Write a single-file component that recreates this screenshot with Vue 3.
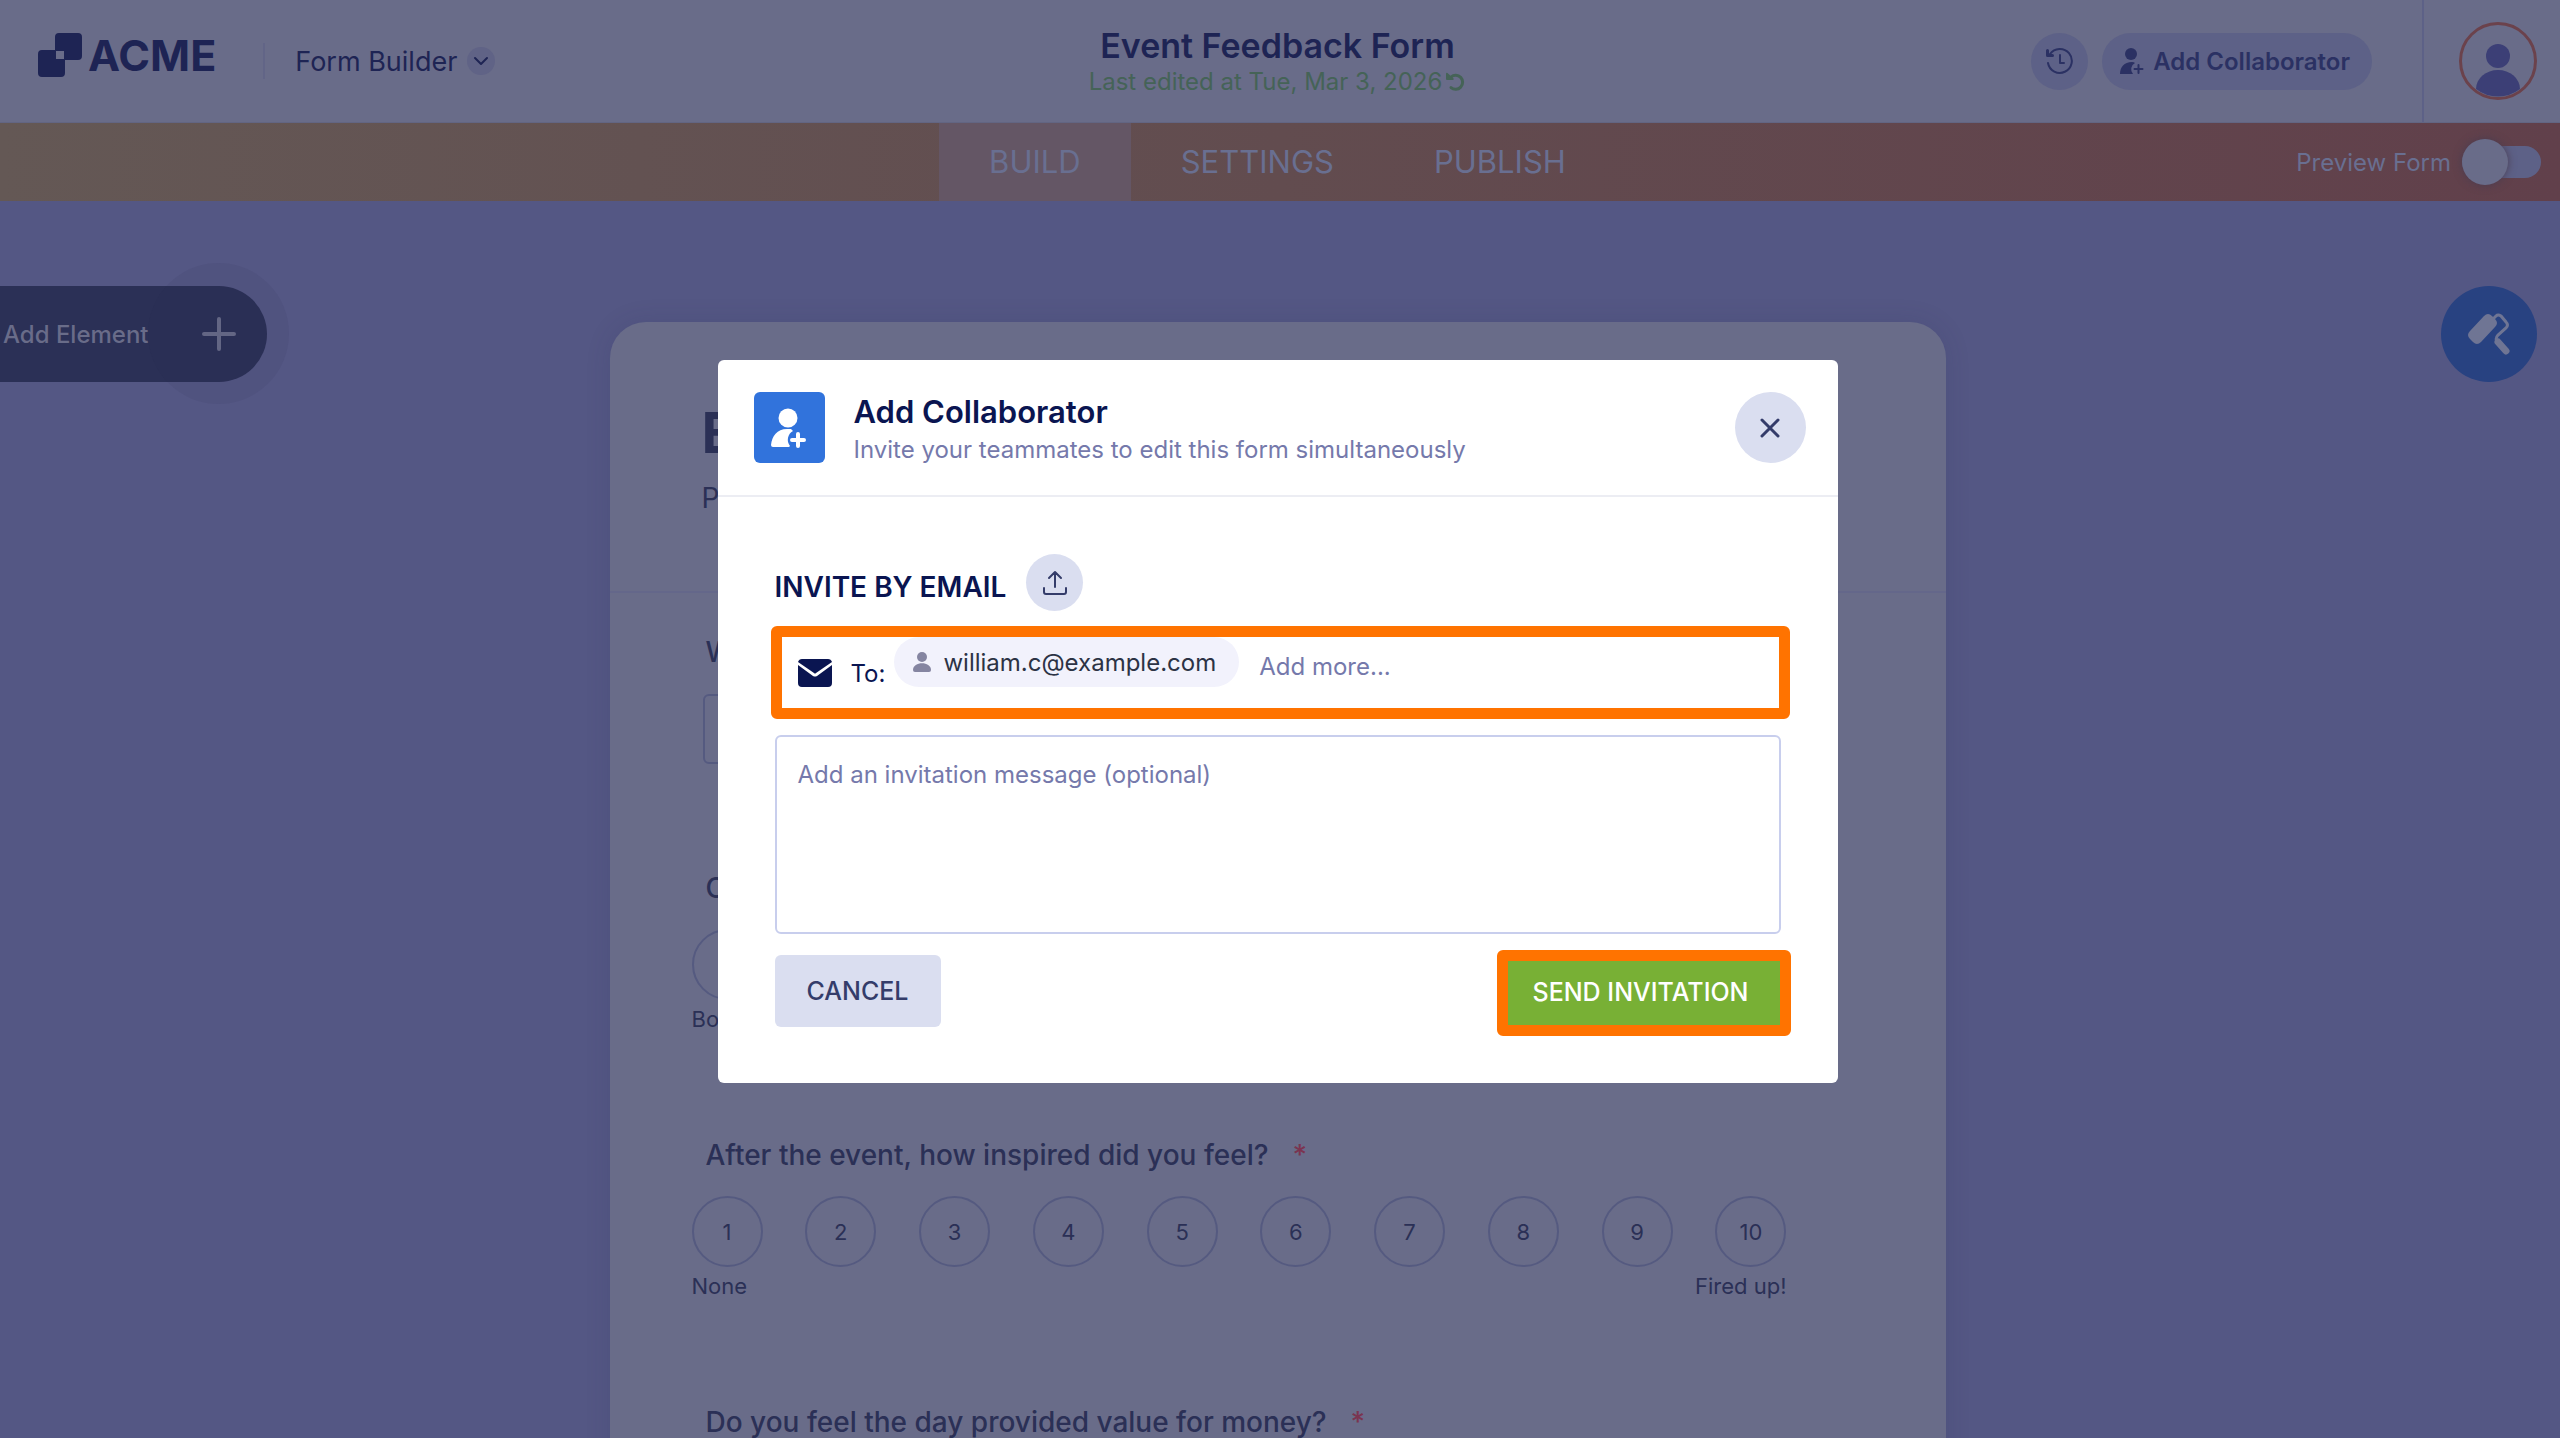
<script setup>
import { ref } from 'vue'

const tabs = ['BUILD', 'SETTINGS', 'PUBLISH']
const activeTab = ref('BUILD')
const preview = ref(false)
const extraEmail = ref('')
const message = ref('')

const questions = [
  { id: 'rating', label: 'Overall', steps: 10, low: 'Boring', high: '' },
  { id: 'inspired', label: 'After the event, how inspired did you feel?', steps: 10, low: 'None', high: 'Fired up!' },
  { id: 'value', label: 'Do you feel the day provided value for money?', steps: 0, low: '', high: '' },
]
</script>

<template>
  <div class="app">
    <header class="topbar">
      <div class="brand-area">
        <a class="brand" href="#">
          <svg class="brand-mark" viewBox="0 0 44 44" aria-hidden="true">
            <path fill="currentColor" fill-rule="evenodd" d="M21 0h19a4 4 0 0 1 4 4v19a4 4 0 0 1-4 4H27v13a4 4 0 0 1-4 4H4a4 4 0 0 1-4-4V21a4 4 0 0 1 4-4h13V4a4 4 0 0 1 4-4zM18 18v8h8v-8z" />
          </svg>
          <span>ACME</span>
        </a>
        <button class="product" type="button">
          Form Builder
          <span class="chevron">
            <svg viewBox="0 0 28 28" aria-hidden="true"><path d="M8 11l6 6 6-6" fill="none" stroke="currentColor" stroke-width="2" stroke-linecap="round" stroke-linejoin="round" /></svg>
          </span>
        </button>
      </div>

      <div class="title-area">
        <h1>Event Feedback Form</h1>
        <p>
          Last edited at Tue, Mar 3, 2026
          <svg viewBox="0 0 20 20" aria-hidden="true">
            <path d="M5 5A7 7 0 1 1 5 15.500" fill="none" stroke="currentColor" stroke-width="3" stroke-linecap="round" />
            <path d="M0 2q0-2 1.500-1L8 7l-1 1H1Q0 8 0 7z" fill="currentColor" />
          </svg>
        </p>
      </div>

      <div class="actions">
        <button class="round" type="button" aria-label="Revision history">
          <svg viewBox="0 0 28 28" fill="none" stroke="currentColor" stroke-width="2" stroke-linecap="round" stroke-linejoin="round" aria-hidden="true">
            <path d="M2 16a12 12 0 1 0 2-9" />
            <path d="M1.500 3.500v5h5" stroke-width="3" />
            <path d="M14 8v8h4" />
          </svg>
        </button>
        <button class="collab" type="button">
          <svg viewBox="0 0 24 26" aria-hidden="true">
            <circle cx="11" cy="6" r="6" fill="currentColor" />
            <path d="M12 14q2 0 3 1a7 7 0 0 0-2 11H0c0-7 4-12 12-12z" fill="currentColor" />
            <path d="M18.500 17v8M14.500 21h8" stroke="currentColor" stroke-width="2" stroke-linecap="round" />
          </svg>
          Add Collaborator
        </button>
        <div class="account">
          <button class="avatar" type="button" aria-label="Account">
            <svg viewBox="0 0 72 72" aria-hidden="true">
              <circle cx="36" cy="31" r="12" fill="currentColor" />
              <path d="M14 64a22 19 0 0 1 44 0a36 36 0 0 1-44 0z" fill="currentColor" />
            </svg>
          </button>
        </div>
      </div>
    </header>

    <nav class="tabbar">
      <div class="tabs">
        <button
          v-for="tab in tabs"
          :key="tab"
          type="button"
          class="tab"
          :class="{ active: tab === activeTab }"
          @click="activeTab = tab"
        >{{ tab }}</button>
      </div>
      <label class="preview">
        Preview Form
        <input v-model="preview" type="checkbox">
        <span class="track"><span class="knob"></span></span>
      </label>
    </nav>

    <main class="workspace">
      <div class="side">
        <button class="add-element" type="button">
          Add Element
          <svg viewBox="0 0 34 34" aria-hidden="true"><path d="M17 2v30M2 17h30" stroke="currentColor" stroke-width="4" stroke-linecap="round" /></svg>
        </button>
      </div>

      <form class="card" @submit.prevent>
        <div class="card-head">
          <h2>Event</h2>
          <p>Please</p>
        </div>
        <div class="question">
          <label class="q-label" for="field-text">What</label>
          <input id="field-text" class="text-field" type="text">
        </div>
        <fieldset v-for="q in questions" :key="q.id" class="question">
          <legend class="q-label">{{ q.label }}<span class="required">*</span></legend>
          <div v-if="q.steps" class="scale">
            <label v-for="n in q.steps" :key="n">
              <input type="radio" :name="q.id" :value="n">{{ n }}
            </label>
          </div>
          <div class="ends"><span>{{ q.low }}</span><span>{{ q.high }}</span></div>
        </fieldset>
      </form>

      <div class="side end">
        <button class="designer" type="button" aria-label="Form designer">
          <svg viewBox="0 0 42 42" aria-hidden="true">
            <path d="M2 18L16 3q4-4 8 0l3 3q4 4 0 8L13 29q-4 4-8 0l-3-3q-4-4 0-8z" fill="currentColor" />
            <path d="M26 5l2-2q2-2 5 0l5 6q3 3 0 6l-8 7q-3 3-1 7" fill="none" stroke="currentColor" stroke-width="3" stroke-linecap="round" />
            <path d="M30 29l8 9" stroke="currentColor" stroke-width="7" stroke-linecap="round" />
          </svg>
        </button>
      </div>
    </main>

    <div class="modal-layer">
      <section class="modal" role="dialog" aria-modal="true" aria-labelledby="modal-title">
        <header class="modal-head">
          <span class="modal-icon">
            <svg viewBox="0 0 36 40" aria-hidden="true">
              <circle cx="17" cy="10" r="9.500" fill="currentColor" />
              <path d="M16 21h4l2 2a10 10 0 0 0-3 15l-1 1H2q-2 0-2-2c1-9 6-16 16-16z" fill="currentColor" />
              <path d="M27 26v12M21 32h12" stroke="currentColor" stroke-width="4" stroke-linecap="round" />
            </svg>
          </span>
          <div class="modal-title">
            <h2 id="modal-title">Add Collaborator</h2>
            <p>Invite your teammates to edit this form simultaneously</p>
          </div>
          <button class="close" type="button" aria-label="Close">
            <svg viewBox="0 0 20 20" aria-hidden="true"><path d="M2 2l16 16M18 2L2 18" stroke="currentColor" stroke-width="3" stroke-linecap="round" /></svg>
          </button>
        </header>

        <form class="modal-body" @submit.prevent>
          <div class="invite-row">
            <h3>INVITE BY EMAIL</h3>
            <button class="upload" type="button" aria-label="Import emails">
              <svg viewBox="0 0 26 26" fill="none" stroke="currentColor" stroke-width="2" stroke-linecap="round" stroke-linejoin="round" aria-hidden="true">
                <path d="M13 17V2M7 8l6-6 6 6M2 18v4q0 2 2 2h18q2 0 2-2v-4" />
              </svg>
            </button>
          </div>

          <div class="to-field">
            <svg class="mail" viewBox="0 0 34 28" aria-hidden="true">
              <path d="M4 0h26q3 0 4 3L18 14q-1 1-2 0L0 3q1-3 4-3z" fill="currentColor" />
              <path d="M0 6l15 11q2 1 4 0L34 6v18q0 4-4 4H4q-4 0-4-4z" fill="currentColor" />
            </svg>
            <label for="more-emails">To:</label>
            <span class="chip">
              <svg viewBox="0 0 18 20" aria-hidden="true">
                <circle cx="9" cy="5" r="5" fill="currentColor" />
                <path d="M0 18c0-9 18-9 18 0q0 2-2 2H2q-2 0-2-2z" fill="currentColor" />
              </svg>
              william.c@example.com
            </span>
            <input id="more-emails" v-model="extraEmail" type="text" placeholder="Add more...">
          </div>

          <textarea v-model="message" aria-label="Invitation message" placeholder="Add an invitation message (optional)"></textarea>

          <div class="buttons">
            <button class="cancel" type="button">CANCEL</button>
            <button class="send" type="submit">SEND INVITATION</button>
          </div>
        </form>
      </section>
    </div>
  </div>
</template>

<style>
body {
  margin: 0;
  background: #545784;
}
</style>

<style scoped>
* {
  box-sizing: border-box;
}

.app {
  --paper: #696c89;
  --ink: #1e2454;
  --form-ink: #2b3056;
  position: relative;
  height: 100vh;
  overflow: hidden;
  display: flex;
  flex-direction: column;
  background: #545784;
  color: var(--ink);
  font-family: Inter, "Liberation Sans", sans-serif;
  font-size: 24px;
}

h1, h2, h3, p {
  margin: 0;
}

button {
  border: 0;
  padding: 0;
  background: none;
  color: inherit;
  font: inherit;
}

svg {
  display: block;
  flex: none;
}

/* Top bar */
.topbar {
  flex: none;
  display: grid;
  grid-template-columns: 1fr auto 1fr;
  height: 123px;
  padding-right: 5px;
  background: var(--paper);
  border-bottom: 1px solid #626582;
}

.brand-area {
  display: flex;
  align-items: center;
  padding-left: 38px;
}

.brand {
  display: flex;
  align-items: center;
  gap: 6px;
  height: 44px;
  margin-bottom: 12px;
  color: var(--ink);
  font-size: 43px;
  font-weight: 700;
  text-decoration: none;
}

.brand-mark {
  width: 44px;
}

.product {
  display: flex;
  align-items: center;
  gap: 10px;
  height: 36px;
  margin-left: 47px;
  padding-left: 30px;
  border-left: 2px solid #626587;
  font-size: 27px;
}

.chevron {
  width: 28px;
  height: 28px;
  border-radius: 50%;
  background: #606386;
}

.title-area {
  padding-top: 24px;
  text-align: center;
}

.title-area h1 {
  font-size: 34px;
  font-weight: 600;
  line-height: 44px;
}

.title-area p {
  display: flex;
  align-items: center;
  justify-content: center;
  gap: 4px;
  color: #456357;
  line-height: 28px;
}

.title-area svg {
  width: 20px;
}

.actions {
  display: flex;
  align-items: center;
  justify-content: flex-end;
  color: #2b3163;
}

.round {
  display: grid;
  place-items: center;
  width: 57px;
  height: 57px;
  margin-right: 14px;
  border-radius: 50%;
  background: #5d6187;
}

.round svg {
  width: 28px;
}

.collab {
  display: flex;
  align-items: center;
  gap: 9px;
  height: 57px;
  padding: 0 22px 0 18px;
  border-radius: 29px;
  background: #5d6187;
  font-weight: 600;
}

.collab svg {
  width: 24px;
}

.account {
  display: flex;
  align-items: center;
  height: 100%;
  margin-left: 50px;
  padding: 0 18px 0 35px;
  border-left: 2px solid #5d6187;
}

.avatar {
  width: 78px;
  height: 78px;
  border: 3px solid #6b424c;
  border-radius: 50%;
  color: #3c3f76;
}

/* Tab bar */
.tabbar {
  flex: none;
  display: grid;
  grid-template-columns: 1fr auto 1fr;
  height: 78px;
  padding-right: 5px;
  background: linear-gradient(90deg, #645855, #624c4f 50%, #61404b);
  color: #696f91;
}

.tabs {
  grid-column: 2;
  display: flex;
}

.tab {
  padding: 0 50px 2px;
  font-size: 31px;
}

.tab.active {
  background: #645665;
}

.preview {
  display: flex;
  align-items: center;
  justify-content: flex-end;
  gap: 11px;
  padding-right: 14px;
  position: relative;
}

.preview input,
.scale input {
  position: absolute;
  opacity: 0;
  margin: 0;
}

.track {
  display: flex;
  align-items: center;
  width: 79px;
  height: 32px;
  border-radius: 16px;
  background: #5d6187;
}

.knob {
  width: 46px;
  height: 46px;
  border-radius: 50%;
  background: var(--paper);
  box-shadow: 0 0 8px #4a3c50;
}

/* Workspace */
.workspace {
  flex: 1;
  display: grid;
  grid-template-columns: 1fr minmax(0, 1336px) 1fr;
  align-items: start;
  padding-right: 5px;
}

.side {
  padding-top: 85px;
}

.end {
  display: flex;
  justify-content: flex-end;
  padding-right: 18px;
}

.add-element {
  position: relative;
  display: flex;
  align-items: center;
  justify-content: space-between;
  width: 267px;
  height: 96px;
  padding: 0 31px 0 3px;
  border-radius: 0 48px 48px 0;
  background: #2b3056;
  color: #696c89;
  font-weight: 500;
}

.add-element::before {
  content: "";
  position: absolute;
  top: -23px;
  right: -22px;
  width: 141px;
  height: 141px;
  border-radius: 50%;
  background: rgba(40, 44, 80, 0.08);
}

.add-element svg {
  width: 34px;
}

.designer {
  display: grid;
  place-items: center;
  width: 96px;
  height: 96px;
  border-radius: 50%;
  background: #284281;
  color: #6f7594;
}

.designer svg {
  width: 42px;
}

/* Form card */
.card {
  align-self: stretch;
  margin-top: 121px;
  border-radius: 36px 36px 0 0;
  background: var(--paper);
  color: var(--form-ink);
  box-shadow: 0 0 24px rgba(40, 44, 90, 0.15);
}

.card-head {
  height: 271px;
  padding: 76px 92px 0;
  border-bottom: 2px solid #64678a;
}

.card-head h2 {
  font-size: 56px;
  font-weight: 700;
  line-height: 70px;
}

.card-head p {
  margin-top: 12px;
  font-size: 28px;
  line-height: 36px;
}

.question {
  display: block;
  height: 267px;
  margin: 0;
  border: 0;
  padding: 0 159px 0 82px;
}

.card-head + .question {
  height: 277px;
  padding-top: 41px;
}

.q-label {
  display: block;
  padding: 0 0 0 14px;
  font-size: 28px;
  font-weight: 500;
  line-height: 36px;
}

.required {
  margin-left: 24px;
  color: #7b3450;
}

.text-field {
  display: block;
  width: 100%;
  height: 70px;
  margin: 24px 0 0 11px;
  border: 2px solid #555a80;
  border-radius: 6px;
  background: none;
}

.scale {
  display: flex;
  justify-content: space-between;
  margin-top: 23px;
  font-size: 22px;
}

.scale label {
  display: grid;
  place-items: center;
  width: 71px;
  height: 71px;
  border: 2px solid #555a80;
  border-radius: 50%;
}

.ends {
  display: flex;
  justify-content: space-between;
  margin-top: 5px;
  font-size: 22px;
  line-height: 28px;
}

/* Dialog */
.modal-layer {
  position: absolute;
  inset: 0;
  display: flex;
  align-items: flex-start;
  justify-content: center;
  padding: 360px 5px 0 0;
}

.modal {
  width: 1120px;
  max-width: 100%;
  border-radius: 6px;
  background: #fff;
  color: #0a1551;
}

.modal-head {
  display: flex;
  align-items: center;
  height: 137px;
  padding: 0 32px 0 36px;
  border-bottom: 2px solid #ecedf3;
}

.modal-icon {
  display: grid;
  place-items: center;
  width: 71px;
  height: 71px;
  border-radius: 6px;
  background: #3173dc;
  color: #fff;
}

.modal-icon svg {
  width: 36px;
}

.modal-title {
  flex: 1;
  margin-left: 29px;
  padding-top: 6px;
}

.modal-title h2 {
  font-size: 31px;
  font-weight: 600;
  line-height: 38px;
}

.modal-title p {
  color: #7579ab;
  line-height: 38px;
}

.close,
.upload {
  display: grid;
  place-items: center;
  border-radius: 50%;
  background: #dadef0;
  color: #343c6a;
}

.close {
  width: 71px;
  height: 71px;
}

.close svg {
  width: 20px;
}

.upload {
  width: 57px;
  height: 57px;
}

.upload svg {
  width: 26px;
}

.modal-body {
  padding: 57px 57px 56px;
}

.invite-row {
  display: flex;
  align-items: flex-end;
  gap: 20px;
}

.invite-row h3 {
  font-size: 28px;
  font-weight: 600;
  line-height: 48px;
}

.to-field {
  display: flex;
  align-items: flex-start;
  height: 93px;
  margin: 15px -9px 16px -4px;
  padding-left: 16px;
  border: 11px solid #ff7300;
  border-radius: 6px;
}

.mail {
  width: 34px;
  margin-top: 22px;
}

.to-field label {
  margin-left: 19px;
  line-height: 73px;
}

.chip {
  display: flex;
  align-items: center;
  gap: 12px;
  height: 50px;
  margin: 0 20px 0 9px;
  padding: 0 23px 0 19px;
  border-radius: 25px;
  background: #f2f2fc;
  color: #2c3345;
}

.chip svg {
  width: 18px;
  color: #8585a1;
}

.to-field input {
  flex: 1;
  min-width: 0;
  height: 58px;
  border: 0;
  padding: 0;
  outline: 0;
  background: none;
  color: inherit;
  font: inherit;
}

textarea {
  display: block;
  width: 100%;
  height: 199px;
  border: 2px solid #c8ceed;
  border-radius: 6px;
  padding: 20px 21px;
  background: none;
  color: inherit;
  font: inherit;
  line-height: 36px;
  resize: none;
}

::placeholder {
  color: #7579ab;
  opacity: 1;
}

.buttons {
  display: flex;
  align-items: flex-start;
  justify-content: space-between;
  height: 72px;
  margin-top: 21px;
  font-size: 25px;
  font-weight: 500;
}

.cancel {
  width: 166px;
  height: 72px;
  border-radius: 6px;
  background: #dadef0;
  color: #343c6a;
}

.send {
  width: 294px;
  height: 86px;
  margin: -5px -10px 0 0;
  padding: 0 6px 3px 0;
  border: 11px solid #ff7300;
  border-radius: 6px;
  background: #78b035;
  color: #fff;
}
</style>
